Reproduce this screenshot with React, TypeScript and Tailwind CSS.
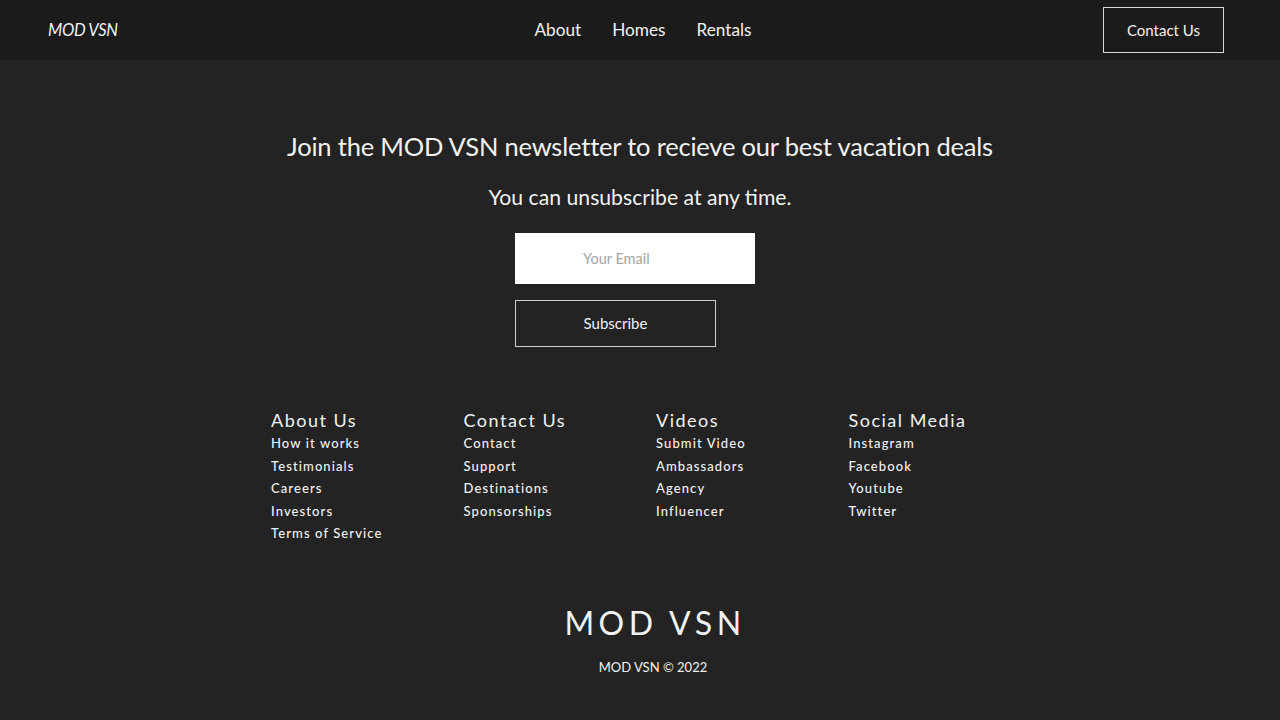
import React from "react";

const font = { fontFamily: "Lato, 'Open Sans', sans-serif" };

const cols = [
  { title: "About Us", links: ["How it works", "Testimonials", "Careers", "Investors", "Terms of Service"] },
  { title: "Contact Us", links: ["Contact", "Support", "Destinations", "Sponsorships"] },
  { title: "Videos", links: ["Submit Video", "Ambassadors", "Agency", "Influencer"] },
  { title: "Social Media", links: ["Instagram", "Facebook", "Youtube", "Twitter"] },
];

export default function App() {
  return (
    <div className="w-[1280px] h-[720px] bg-[#232323] text-[#f2f2f2] overflow-hidden" style={font}>
      <header className="h-[60px] bg-[#1b1b1b] flex items-center justify-between pl-[48px] pr-[56px]">
        <div className="w-[300px] italic text-[16.5px] tracking-[-0.3px]">MOD VSN</div>
        <nav className="flex gap-[31px] text-[17.2px] ml-[14px]">
          <span>About</span>
          <span>Homes</span>
          <span>Rentals</span>
        </nav>
        <div className="w-[300px] flex justify-end">
          <button className="w-[121px] h-[46px] border border-[#d8d8d8] text-[15px] text-[#f2f2f2]">Contact Us</button>
        </div>
      </header>

      <section className="flex flex-col items-center pt-[70px]">
        <h1 className="text-[25.5px] leading-[32px] tracking-[-0.2px]">Join the MOD VSN newsletter to recieve our best vacation deals</h1>
        <p className="text-[21.2px] leading-[28px] mt-[21px]">You can unsubscribe at any time.</p>
        <div className="w-[240px] flex flex-col mt-[22px] mr-[10px]">
          <div className="h-[51px] bg-white flex items-center pl-[68px] text-[14.5px] text-[#a5a5a5]">Your Email</div>
          <button className="w-[201px] h-[47px] mt-[16px] border border-[#d0d0d0] text-[15px] text-[#f2f2f2]">Subscribe</button>
        </div>
      </section>

      <section className="flex pl-[271px] mt-[61px]">
        {cols.map((c) => (
          <div key={c.title} className="w-[192.5px] flex flex-col">
            <div className="text-[18px] leading-[24px] tracking-[1.5px]">{c.title}</div>
            <ul className="flex flex-col">
              {c.links.map((l) => (
                <li key={l} className="text-[13px] leading-[22.5px] tracking-[1.1px] font-medium">{l}</li>
              ))}
            </ul>
          </div>
        ))}
      </section>

      <footer className="flex flex-col items-center mt-[58px] pl-[30px]">
        <div className="text-[32px] leading-[40px] tracking-[4.5px]">MOD VSN</div>
        <div className="text-[13px] mt-[15px] pr-[4px]">MOD VSN © 2022</div>
      </footer>
    </div>
  );
}
